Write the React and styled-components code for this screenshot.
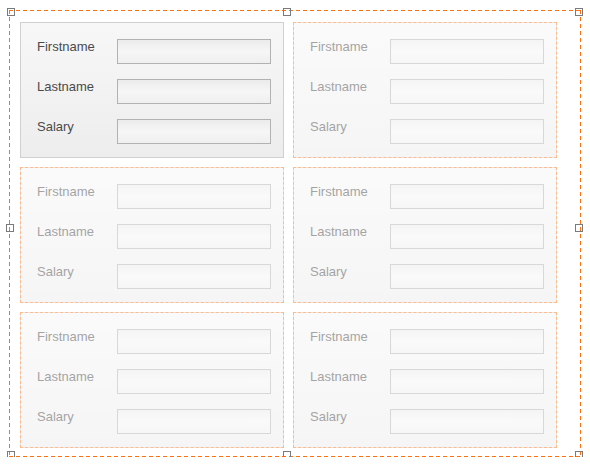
import React from "react";
import styled, { createGlobalStyle } from "styled-components";

const cards = [
  { id: 1, active: true },
  { id: 2 },
  { id: 3 },
  { id: 4 },
  { id: 5 },
  { id: 6 },
];

const fields = ["Firstname", "Lastname", "Salary"];

// resize handles around the selected container
const handles = [
  { x: -2, y: -2 },
  { x: 274, y: -2 },
  { x: 566, y: -2 },
  { x: -3, y: 214 },
  { x: 566, y: 214 },
  { x: -2, y: 441 },
  { x: 274, y: 441 },
  { x: 566, y: 441 },
];

const App = () => {
  return (
    <>
      <GlobalStyle />
      <Page>
        <Canvas>
          <CardGrid>
            {cards.map((card) => (
              <Card key={card.id} $active={card.active}>
                {fields.map((field) => (
                  <FieldRow key={field}>
                    <Label>{field}</Label>
                    <Input type="text" readOnly />
                  </FieldRow>
                ))}
              </Card>
            ))}
          </CardGrid>
          {handles.map((h, i) => (
            <Handle key={i} style={{ left: h.x, top: h.y }} />
          ))}
        </Canvas>
      </Page>
    </>
  );
};

export default App;

const GlobalStyle = createGlobalStyle`
  html, body {
    margin: 0;
    padding: 0;
    background: #ffffff;
  }
  body {
    font-family: "Liberation Sans", Arial, sans-serif;
  }
`;

const Page = styled.div`
  padding: 10px 0 0 9px;
`;

const dashH = "repeating-linear-gradient(to right, #ff6f0f 0 4px, transparent 4px 7px)";
const dashV = "repeating-linear-gradient(to bottom, #ff6f0f 0 4px, transparent 4px 7px)";

const Canvas = styled.div`
  position: relative;
  box-sizing: border-box;
  width: 572px;
  height: 447px;
  padding: 12px 24px 9px 11px;
  background:
    ${dashH} left top / 100% 1px no-repeat,
    ${dashH} left bottom / 100% 1px no-repeat,
    ${dashV} left top / 1px 100% no-repeat,
    ${dashV} right top / 1px 100% no-repeat;
`;

const CardGrid = styled.div`
  display: grid;
  grid-template-columns: 264px 264px;
  grid-auto-rows: 136px;
  column-gap: 9px;
  row-gap: 9px;
`;

const Card = styled.div`
  box-sizing: border-box;
  display: flex;
  flex-direction: column;
  gap: 15px;
  padding: 16px 12px 0 16px;
  border: 1px solid #d0d0d0;
  background: linear-gradient(to bottom, #f7f7f7 0%, #ededed 100%);
  opacity: ${({ $active }) => ($active ? 1 : 0.5)};
  outline: ${({ $active }) => ($active ? "none" : "1px dashed #ff7a1a")};
  outline-offset: -1px;
`;

const FieldRow = styled.div`
  display: flex;
  flex-direction: row;
  align-items: flex-start;
  height: 25px;
`;

const Label = styled.span`
  width: 80px;
  flex-shrink: 0;
  font-size: 13px;
  line-height: 15px;
  color: #4a4a4a;
`;

const Input = styled.input`
  box-sizing: border-box;
  width: 154px;
  height: 25px;
  margin: 0;
  padding: 0 4px;
  border: 1px solid #b2b2b2;
  border-radius: 0;
  outline: none;
  background: linear-gradient(
    to bottom,
    #ebebeb 0%,
    #f6f6f6 50%,
    #efefef 100%
  );
  font-family: "Liberation Sans", Arial, sans-serif;
  font-size: 13px;
`;

const Handle = styled.div`
  position: absolute;
  box-sizing: border-box;
  width: 8px;
  height: 8px;
  border: 1px solid #7a7a7a;
  background: transparent;
`;
